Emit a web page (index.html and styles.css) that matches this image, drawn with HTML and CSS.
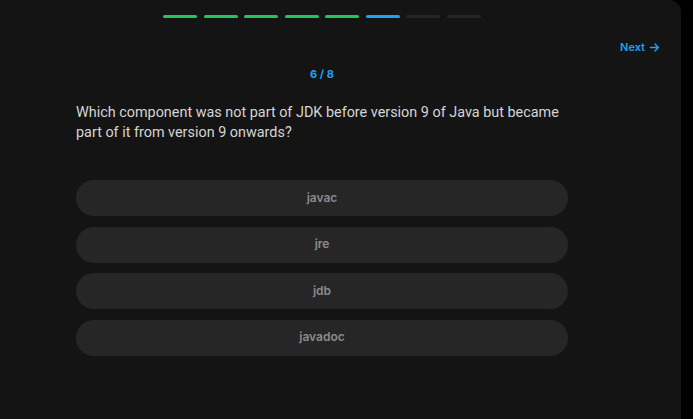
FILE: index.html
```html
<!DOCTYPE html>
<html>
<head>
<meta charset="utf-8">
<link rel="stylesheet" href="styles.css">
</head>
<body>
<div class="card">
  <a class="next" href="#">Next
    <svg class="arrow" viewBox="0 0 12 12" width="11" height="11"><path d="M1.5 6h8.5M6.5 2.2 10.2 6 6.5 9.8" fill="none" stroke="currentColor" stroke-width="1.5" stroke-linecap="round" stroke-linejoin="round"/></svg>
  </a>
  <div class="column">
    <div class="progress">
      <span class="bar done"></span>
      <span class="bar done"></span>
      <span class="bar done"></span>
      <span class="bar done"></span>
      <span class="bar done"></span>
      <span class="bar current"></span>
      <span class="bar"></span>
      <span class="bar"></span>
    </div>
    <div class="counter">6 / 8</div>
    <p class="question">Which component was not part of JDK before version 9 of Java but became part of it from version 9 onwards?</p>
    <div class="options">
      <button class="option">javac</button>
      <button class="option">jre</button>
      <button class="option">jdb</button>
      <button class="option">javadoc</button>
    </div>
  </div>
</div>
</body>
</html>
```

FILE: styles.css
```css
html, body {
  margin: 0;
  padding: 0;
  background: #000;
  font-family: Inter, "Noto Sans", sans-serif;
  overflow: hidden;
}

.card {
  position: relative;
  width: 681px;
  height: 419px;
  background: #141414;
  border-top-right-radius: 12px;
  box-sizing: border-box;
  padding-top: 15px;
}

.column {
  margin-left: 76px;
  width: 492px;
}

.progress {
  display: flex;
  justify-content: center;
  gap: 6.5px;
}

.bar {
  width: 34px;
  height: 3px;
  border-radius: 2px;
  background: #262626;
}

.bar.done {
  background: #22c55e;
}

.bar.current {
  background: #1da1f2;
}

.next {
  position: absolute;
  top: 40px;
  right: 21px;
  display: flex;
  align-items: center;
  gap: 4px;
  color: #1da1f2;
  font-size: 11px;
  font-weight: 600;
  text-decoration: none;
}

.counter {
  margin-top: 49px;
  text-align: center;
  color: #1da1f2;
  font-size: 11px;
  font-weight: 700;
  line-height: 14px;
}

.question {
  margin: 22px 0 0;
  color: #d4d4d4;
  font-family: Roboto, Inter, sans-serif;
  font-size: 14.4px;
  line-height: 20px;
}

.options {
  margin-top: 37px;
  display: flex;
  flex-direction: column;
  gap: 10.5px;
}

.option {
  height: 36px;
  border: none;
  border-radius: 18px;
  background: #262626;
  color: #8a8b8e;
  font-family: Inter, "Noto Sans", sans-serif;
  font-size: 12px;
  font-weight: 600;
  padding: 0 0 2px;
}
```
